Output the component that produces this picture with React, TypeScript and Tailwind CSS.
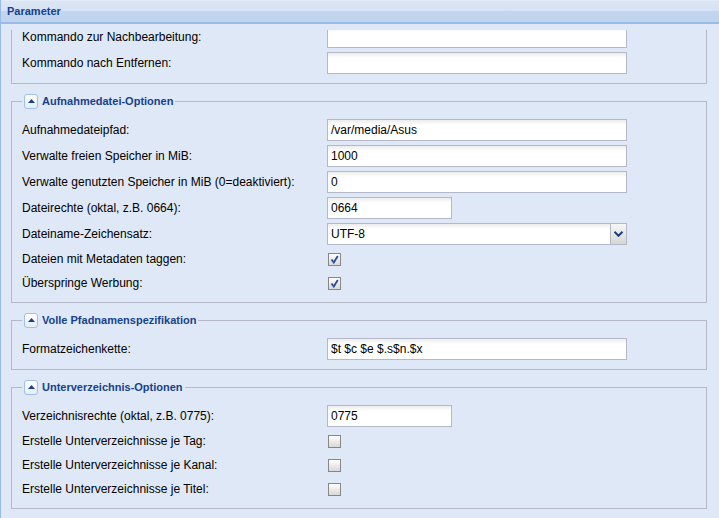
import React from "react";

const FONT = "font-['Liberation_Sans',Arial,sans-serif]";

function CollapseButton() {
  return (
    <span className="flex h-[15px] w-[14px] items-center justify-center rounded-[3px] border border-[#a3bfe6] bg-[linear-gradient(to_bottom,#ffffff,#e4edf9)]">
      <svg width="7" height="4" viewBox="0 0 7 4">
        <path d="M0 4 L3.5 0 L7 4 Z" fill="#15428b" />
      </svg>
    </span>
  );
}

function FieldSet({ title, children }: { title: string; children: React.ReactNode }) {
  return (
    <fieldset className="mb-[9px] ml-[10px] mr-[12px] border border-[#b5b8c8] px-[10px] pb-[5px]">
      <legend className="flex h-[16px] items-center gap-[4px] px-[2px]">
        <CollapseButton />
        <span className="text-[11px] font-bold text-[#15428b]">{title}</span>
      </legend>
      <div className="pt-[10px]">{children}</div>
    </fieldset>
  );
}

function Label({ text }: { text: string }) {
  return <span className="w-[305px] shrink-0 text-[12px] text-black">{text}</span>;
}

function TextRow({ label, value = "", short = false }: { label: string; value?: string; short?: boolean }) {
  return (
    <div className="mb-[4px] flex h-[22px] items-center">
      <Label text={label} />
      <div
        className={`flex h-[22px] items-center border border-[#b5b8c8] bg-[linear-gradient(to_bottom,#ececec,#ffffff_5px)] px-[3px] text-[12px] text-black ${
          short ? "w-[125px]" : "w-[300px]"
        }`}
      >
        {value}
      </div>
    </div>
  );
}

function SelectRow({ label, value }: { label: string; value: string }) {
  return (
    <div className="mb-[4px] flex h-[22px] items-center">
      <Label text={label} />
      <div className="flex h-[22px] w-[300px] border border-[#b5b8c8] bg-white">
        <div className="flex flex-1 items-center bg-[linear-gradient(to_bottom,#ececec,#ffffff_5px)] px-[3px] text-[12px] text-black">
          {value}
        </div>
        <div className="flex w-[16px] items-center justify-center border-l border-[#b5b8c8] bg-[linear-gradient(to_bottom,#f7f7f7,#d6d6d6)]">
          <svg width="9" height="6" viewBox="0 0 9 6">
            <path d="M0.5 0.8 L4.5 4.8 L8.5 0.8" stroke="#1d3f7e" strokeWidth="2" fill="none" />
          </svg>
        </div>
      </div>
    </div>
  );
}

function CheckRow({ label, checked = false }: { label: string; checked?: boolean }) {
  return (
    <div className="mb-[4px] flex h-[20px] items-center">
      <Label text={label} />
      <span className="ml-[1px] flex h-[13px] w-[13px] items-center justify-center border border-[#878787] bg-[linear-gradient(to_bottom,#ffffff,#d8d8d8)]">
        {checked && (
          <svg width="9" height="9" viewBox="0 0 9 9">
            <path d="M1.5 4.5 L3.8 7.5 L7.8 1" stroke="#2a4a9e" strokeWidth="1.8" fill="none" />
          </svg>
        )}
      </span>
    </div>
  );
}

export default function App() {
  return (
    <div className={`h-[518px] w-[719px] overflow-hidden border-l border-[#99bbe8] bg-[#dfe8f6] ${FONT}`}>
      {/* Panel header */}
      <div className="flex h-[24px] items-start border-t border-[#e3ecf8] border-b-2 border-b-[#99bbe8] bg-[linear-gradient(to_bottom,#dbe6f5_0%,#d6e3f4_45%,#c3d6ef_50%,#bfd3ee_100%)] px-[6px]">
        <span className="pt-[4px] text-[11px] font-bold leading-[13px] text-[#15428b]">Parameter</span>
      </div>

      {/* Body */}
      <div className="h-[488px] overflow-hidden" style={{ marginTop: 6 }}>
        <div className="-mt-[4px] mb-[9px] ml-[10px] mr-[12px] border-x border-b border-[#b5b8c8] px-[10px] pb-[5px]">
          <TextRow label="Kommando zur Nachbearbeitung:" />
          <TextRow label="Kommando nach Entfernen:" />
        </div>

        <FieldSet title="Aufnahmedatei-Optionen">
          <TextRow label="Aufnahmedateipfad:" value="/var/media/Asus" />
          <TextRow label="Verwalte freien Speicher in MiB:" value="1000" />
          <TextRow label="Verwalte genutzten Speicher in MiB (0=deaktiviert):" value="0" />
          <TextRow label="Dateirechte (oktal, z.B. 0664):" value="0664" short />
          <SelectRow label="Dateiname-Zeichensatz:" value="UTF-8" />
          <CheckRow label="Dateien mit Metadaten taggen:" checked />
          <CheckRow label="Überspringe Werbung:" checked />
        </FieldSet>

        <FieldSet title="Volle Pfadnamenspezifikation">
          <TextRow label="Formatzeichenkette:" value="$t $c $e $.s$n.$x" />
        </FieldSet>

        <FieldSet title="Unterverzeichnis-Optionen">
          <TextRow label="Verzeichnisrechte (oktal, z.B. 0775):" value="0775" short />
          <CheckRow label="Erstelle Unterverzeichnisse je Tag:" />
          <CheckRow label="Erstelle Unterverzeichnisse je Kanal:" />
          <CheckRow label="Erstelle Unterverzeichnisse je Titel:" />
        </FieldSet>
      </div>
    </div>
  );
}
